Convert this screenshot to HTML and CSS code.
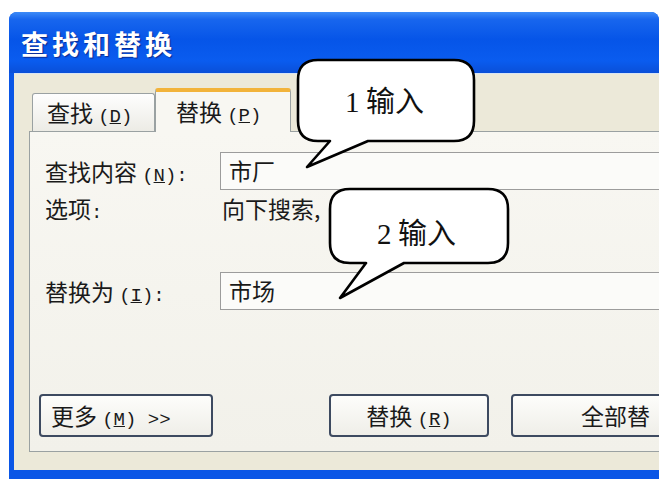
FILE: index.html
```html
<!DOCTYPE html>
<html lang="zh-CN">
<head>
<meta charset="utf-8">
<title>查找和替换</title>
<link rel="stylesheet" href="styles.css">
</head>
<body>
<div class="page">
  <div class="window">
    <div class="titlebar">查找和替换</div>
    <div class="client">
      <div class="tabs">
        <div class="tab">查找 <span class="acc">(<u>D</u>)</span></div>
        <div class="tab active">替换 <span class="acc">(<u>P</u>)</span></div>
      </div>
      <div class="panel">
        <div class="row row-find">
          <span class="label">查找内容 <span class="acc">(<u>N</u>):</span></span>
          <div class="field">市厂</div>
        </div>
        <div class="row row-opt">
          <span class="label">选项<span class="acc">:</span></span>
          <span class="value">向下搜索,</span>
        </div>
        <div class="row row-repl">
          <span class="label">替换为 <span class="acc">(<u>I</u>):</span></span>
          <div class="field">市场</div>
        </div>
        <div class="buttons">
          <div class="btn btn-more">更多 <span class="acc">(<u>M</u>) &gt;&gt;</span></div>
          <div class="btn btn-repl">替换 <span class="acc">(<u>R</u>)</span></div>
          <div class="btn btn-all">全部替</div>
        </div>
      </div>
    </div>
  </div>

  <div class="callout">
    <svg class="bubble" width="671" height="487" viewBox="0 0 671 487">
      <path d="M318,60 H454 Q474,60 474,80 V121 Q474,141 454,141 H368 L307,167 L330,141 H318 Q298,141 298,121 V80 Q298,60 318,60 Z"/>
    </svg>
    <span class="ctext ctext-1"><span class="num">1</span> 输入</span>
  </div>
  <div class="callout">
    <svg class="bubble" width="671" height="487" viewBox="0 0 671 487">
      <path d="M350,189 H488 Q508,189 508,209 V243 Q508,263 488,263 H404 L340,298 L366,263 H350 Q330,263 330,243 V209 Q330,189 350,189 Z"/>
    </svg>
    <span class="ctext ctext-2"><span class="num">2</span> 输入</span>
  </div>
</div>
</body>
</html>
```

FILE: styles.css
```css
html, body {
  margin: 0;
  padding: 0;
  background: #ffffff;
}
.page {
  position: relative;
  width: 671px;
  height: 487px;
  overflow: hidden;
  font-family: "Noto Sans CJK SC", "Liberation Sans", sans-serif;
  color: #1a1a1a;
}
.window {
  margin: 12px 0 0 9px;
  width: 650px;
  height: 467px;
  border-radius: 8px 8px 0 0;
  background: #0a56e6;
  display: flex;
  flex-direction: column;
  overflow: hidden;
}
.titlebar {
  height: 61px;
  box-sizing: border-box;
  padding: 14px 0 0 12px;
  font-size: 27px;
  font-weight: 700;
  letter-spacing: 4px;
  line-height: 36px;
  color: #ffffff;
  text-shadow: 1px 1px 1px #0b2a90;
  background: linear-gradient(to bottom, #3d8bf7 0%, #1866ee 12%, #0655e8 45%, #0a5cef 80%, #0a4fd8 100%);
}
.client {
  flex: 1;
  margin: 0 0 9px 5px;
  background: #ece9d9;
  border-top: 1px solid #d7e4f5;
  display: flex;
  flex-direction: column;
  padding: 14px 0 0 18px;
}
.tabs {
  display: flex;
  align-items: flex-end;
  height: 43px;
  position: relative;
  z-index: 1;
}
.tab {
  box-sizing: border-box;
  height: 38px;
  width: 123px;
  border: 1px solid #9aa1a2;
  border-bottom: none;
  border-radius: 3px 3px 0 0;
  background: linear-gradient(to bottom, #fefefe, #ecebe5);
  font-size: 23px;
  line-height: 36px;
  padding-left: 14px;
  white-space: nowrap;
}
.tab.active {
  height: 44px;
  width: 136px;
  margin-bottom: -1px;
  border-top: 4px solid #f2b33a;
  background: #f8f7f2;
  padding-left: 20px;
  line-height: 38px;
}
.acc {
  font-family: "Liberation Mono", monospace;
  font-size: 19px;
  letter-spacing: 0;
}
.panel {
  flex: 1;
  margin-right: -20px;
  margin-left: -3px;
  margin-bottom: 18px;
  border: 1px solid #9aa1a2;
  border-right: none;
  background: linear-gradient(to bottom, #f8f7f2, #f2f1ea);
  display: flex;
  flex-direction: column;
  padding: 20px 0 0 15px;
}
.row {
  display: flex;
  align-items: center;
  font-size: 23px;
  white-space: nowrap;
}
.label {
  width: 175px;
  flex: none;
}
.field {
  flex: 1;
  box-sizing: border-box;
  height: 38px;
  border: 1px solid #9c9c9c;
  border-right: none;
  background: #fbfbf9;
  padding-left: 8px;
  line-height: 34px;
}
.row-opt {
  margin-top: 3px;
  height: 30px;
}
.value {
  padding-left: 2px;
}
.row-repl {
  margin-top: 49px;
}
.buttons {
  display: flex;
  margin-top: 84px;
  margin-left: -6px;
}
.btn {
  box-sizing: border-box;
  height: 43px;
  border: 2px solid #3d4a60;
  border-radius: 4px;
  background: linear-gradient(to bottom, #fdfdfb, #efeee8);
  font-size: 23px;
  line-height: 38px;
  text-align: center;
  flex: none;
  white-space: nowrap;
}
.btn-more {
  width: 174px;
  text-align: left;
  padding-left: 10px;
}
.btn-repl {
  width: 160px;
  margin-left: 116px;
}
.btn-all {
  width: 200px;
  margin-left: 22px;
  text-align: left;
  padding-left: 68px;
}
.callout {
  position: absolute;
  left: 0;
  top: 0;
  width: 671px;
  height: 487px;
  pointer-events: none;
}
.bubble {
  position: absolute;
  left: 0;
  top: 0;
}
.bubble path {
  fill: #ffffff;
  stroke: #000000;
  stroke-width: 2.6;
  stroke-linejoin: round;
}
.ctext {
  position: absolute;
  font-size: 29px;
  line-height: 32px;
  color: #111;
  white-space: nowrap;
  font-family: "Noto Sans CJK SC", sans-serif;
}
.num {
  font-family: "Liberation Serif", serif;
  font-size: 29px;
}
.ctext-1 {
  left: 345px;
  top: 83px;
}
.ctext-2 {
  left: 377px;
  top: 215px;
}
```
